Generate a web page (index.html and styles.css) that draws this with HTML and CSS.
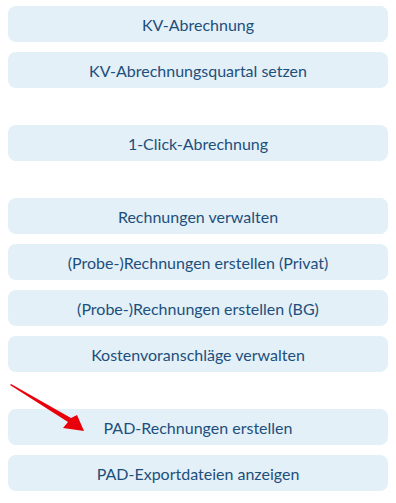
FILE: index.html
```html
<!DOCTYPE html>
<html lang="de">
<head>
    <meta charset="UTF-8">
    <meta name="viewport" content="width=device-width, initial-scale=1.0">
    <title>Abrechnung</title>
    <link rel="stylesheet" href="styles.css">
</head>
<body>
    <div class="menu">
        <div class="group">
            <button class="item">KV-Abrechnung</button>
            <button class="item">KV-Abrechnungsquartal setzen</button>
        </div>
        <div class="group">
            <button class="item">1-Click-Abrechnung</button>
        </div>
        <div class="group">
            <button class="item">Rechnungen verwalten</button>
            <button class="item">(Probe-)Rechnungen erstellen (Privat)</button>
            <button class="item">(Probe-)Rechnungen erstellen (BG)</button>
            <button class="item">Kostenvoranschläge verwalten</button>
        </div>
        <div class="group">
            <button class="item">PAD-Rechnungen erstellen</button>
            <button class="item">PAD-Exportdateien anzeigen</button>
        </div>
    </div>
    <svg class="arrow" width="100" height="60" viewBox="0 0 100 60">
        <polygon points="10,10 68,47 63,53 84,56 77,40 71,43 11,9" fill="#e8000b"/>
    </svg>
</body>
</html>
```

FILE: styles.css
```css
body {
    margin: 0;
    font-family: Lato, "Noto Sans", sans-serif;
    background: #fff;
}

.menu {
    display: flex;
    flex-direction: column;
    gap: 37px;
    padding: 6px 8px;
    width: 380px;
}

.group {
    display: flex;
    flex-direction: column;
    gap: 10px;
}

.item {
    height: 36px;
    border: none;
    border-radius: 8px;
    background-color: #e3f0f7;
    color: #1d4f7c;
    font-family: inherit;
    font-size: 16px;
    cursor: pointer;
}

.arrow {
    position: absolute;
    left: 0;
    top: 375px;
}
```
